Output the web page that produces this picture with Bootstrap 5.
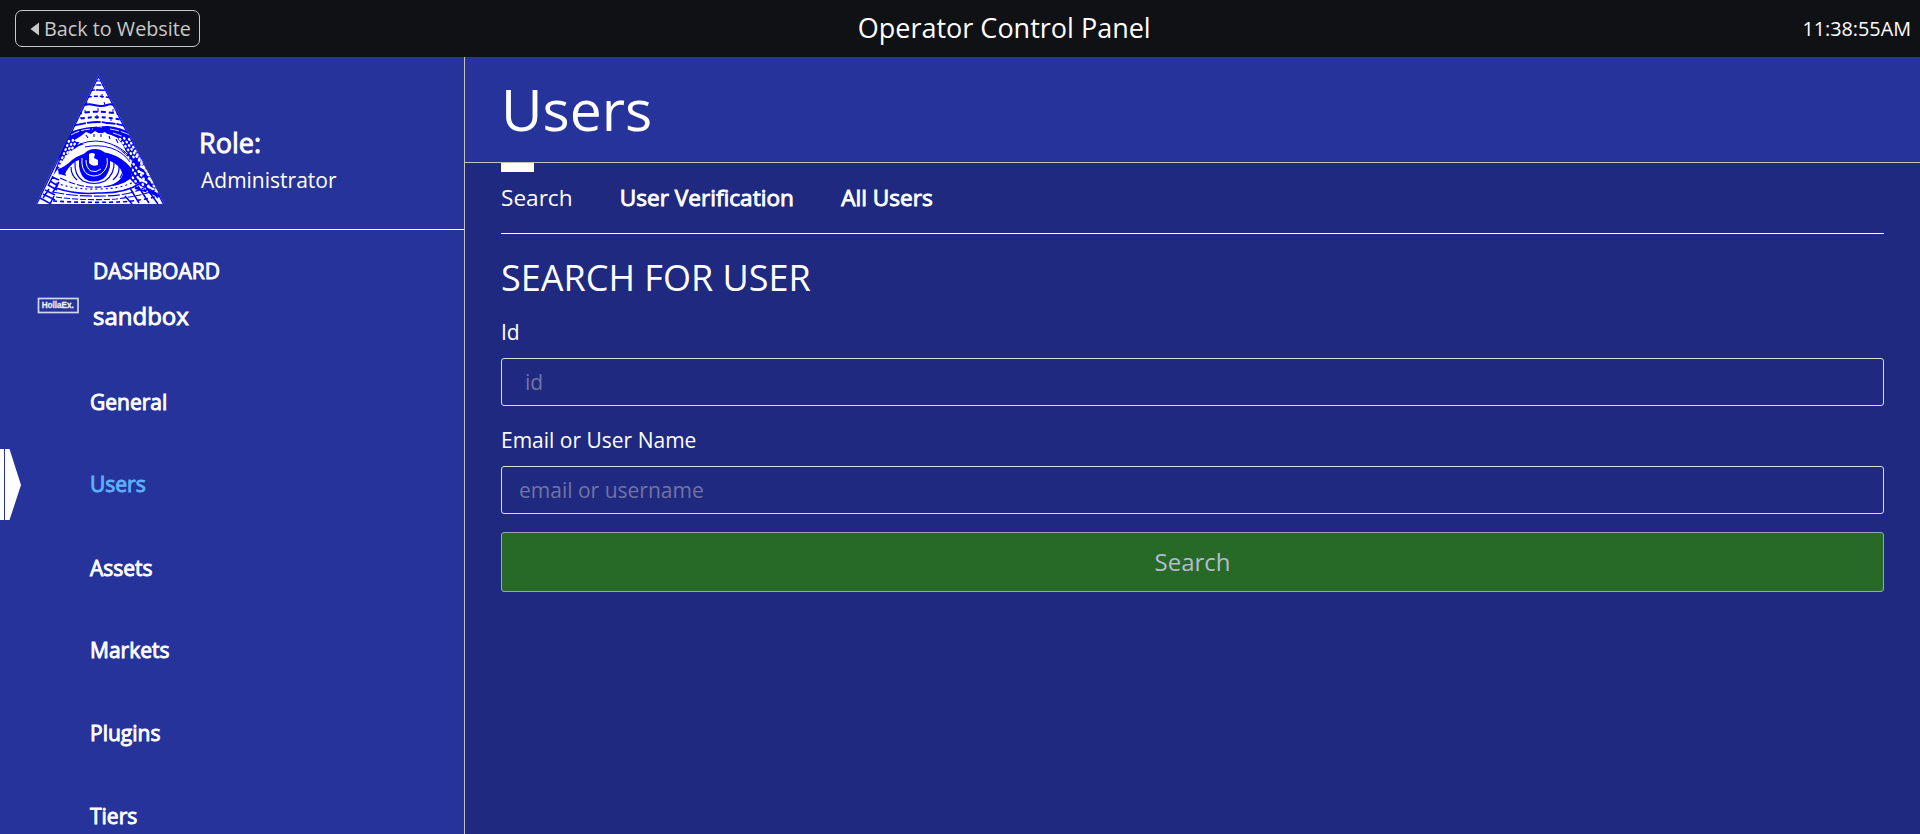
<!DOCTYPE html>
<html lang="en">
<head>
<meta charset="utf-8">
<meta name="viewport" content="width=device-width, initial-scale=1">
<title>Operator Control Panel</title>
<link href="https://cdn.jsdelivr.net/npm/bootstrap@5.3.0/dist/css/bootstrap.min.css" rel="stylesheet">
<style>
  body { font-family: "Open Sans", "Noto Sans", sans-serif; font-size: 21px; background: #1f2980; color: #fff; height: 100vh; overflow: hidden; }
  .topbar { height: 57px; background: #0f1114; padding: 0 9px 0 15px; font-size: 19.800px; line-height: 28px; }
  .topbar-title { font-size: 27px; line-height: 36px; padding: 0 0 2px 6px; }
  .btn-back { height: 37px; width: 185px; padding: 0 0 0 14px; border: 1px solid #c9c9c9; border-radius: 7px; color: #c9c9c9; font-size: 19.800px; line-height: 35px; white-space: nowrap; }
  .shell { height: calc(100vh - 57px); }
  .sidebar { width: 465px; background: #26339b; border-right: 1px solid #c4c2b8; overflow: hidden; }
  .profile { height: 173px; padding: 18px 0 0 36px; border-bottom: 1px solid #fff; }
  .heavy { -webkit-text-stroke: .9px currentColor; }
  .role-block { margin: 50px 0 0 35px; }
  .role-name { font-size: 27px; line-height: 36px; }
  .role-value { line-height: 32px; margin: 3px 0 0 2px; }
  .brand { padding: 19px 0 0 37px; height: 131px; }
  .brand-text { margin-left: 13px; line-height: 45px; }
  .brand-text .site { font-size: 24px; line-height: 43px; }
  .brand svg { margin-top: 48px; }
  .side-nav .nav-link { height: 82.8px; padding: 0 0 0 90px; line-height: 82.8px; color: #fff; position: relative; }
  .side-nav .nav-link.active { color: #5fb0ff; line-height: 81.4px; }
  .marker { position: absolute; left: 0; top: 5px; }
  .page-head { height: 106px; background: #26339b; border-bottom: 1px solid #c4c2b8; padding-left: 36px; }
  .page-head h1 { font-size: 57px; font-weight: 400; line-height: 104px; margin: 0; }
  .page-body { padding: 0 36px; }
  .tabs { height: 71px; border-bottom: 1px solid #fff; gap: 47.3px; font-size: 22.600px; }
  .tabs .nav-link { padding: 0; line-height: 70px; color: #fff; position: relative; }
  .tabs .nav-link.active::before { content: ""; position: absolute; left: 0; top: 0; width: 33px; height: 9px; background: #fff; }
  h2.section-title { font-size: 36px; font-weight: 400; line-height: 50px; margin: 19px 0 14px; }
  .form-label { display: block; margin: 0 0 11px; line-height: 30px; }
  .form-control, .form-control:focus { height: 48px; padding: 0 17px; font-size: 21px; background: transparent; border: 1px solid #dcdbe0; border-radius: 3px; color: #fff; }
  .form-control.id-field { padding-left: 23px; margin-bottom: 19px; }
  .form-control::placeholder { color: #7174a3; opacity: 1; }
  .btn-find { height: 60px; margin-top: 18px; font-size: 24px; padding: 0; background: #276a27; border: 1px solid #9aa2b4; border-radius: 3px; color: #b5bbd3; }
</style>
</head>
<body>
<header class="topbar d-flex align-items-center justify-content-between">
  <button class="btn btn-back d-flex align-items-center" type="button">
    <svg width="10" height="14" viewBox="0 0 10 14" class="me-1"><path d="M9 .5v13L.5 7z" fill="#c9c9c9"/></svg><span>Back to Website</span>
  </button>
  <div class="topbar-title">Operator Control Panel</div>
  <div>11:38:55AM</div>
</header>
<div class="shell d-flex">
  <aside class="sidebar flex-shrink-0">
    <div class="profile d-flex">
      <svg width="128" height="129" viewBox="0 0 128 129" aria-label="Eye of Providence">
        <defs><clipPath id="tri"><path d="M62.500 0L128 129H0z"/></clipPath></defs>
        <g clip-path="url(#tri)" fill="none" stroke="#00f">
          <path d="M0 0h128v129H0z" fill="#fff" stroke="none"/>
          <path d="M62.500 0L0 129M62.500 0L128 129" stroke-width="2.500"/>
          <!-- courses of brick near the apex -->
          <g stroke-width="1.500">
            <path d="M57 5.500q6 1 12 0" stroke-width="1"/>
            <path d="M54 9.500q9 1 17 0" stroke-dasharray="5 1"/>
            <path d="M50 16q12-2 25 0" stroke-dasharray="9 1"/>
            <path d="M46 23q16-4 32 1" stroke-dasharray="4 2"/>
            <path d="M43 32q7-4 15-2t13 0 12 2" stroke-width="2"/>
            <path d="M41 39q22-5 46 1" stroke-dasharray="5 3" stroke-width="2"/>
            <path d="M38 45q24-6 52 1" stroke-dasharray="4 3" stroke-width="2"/>
            <path d="M36 51q24-6 34-3 12 0 24 5" stroke-width="1.800" stroke-dasharray="14 1"/>
            <path d="M52 20v3m14-4v4M51 27l-1 3m18-3l1 3M49 35v3m13-5v4m15-3v4M45 42v2m16-4v4m14-2v4" stroke-width="1"/>
          </g>
          <!-- brow -->
          <path d="M34 57q14-6 38-6 13 1 24 8l5 19q-17-17-29-18l-3-3-5 2-5-3-4 3-5-2-5 4-8 5-12 15-5 5z" fill="#00f" stroke="none"/>
          <path d="M39 54q14-4 27-2M35 60q10-6 22-6M74 54q13 2 21 7M77 58q10 3 18 8" stroke="#fff" stroke-width=".9" stroke-dasharray="9 2"/>
          <!-- shaded stone on both sides -->
          <path d="M31 63L17 101q5-9 15-16 11-10 20-13l-7-4z" fill="#00f" stroke="none"/>
          <path d="M91 59l32 63q-16-6-31-10 3-15-1-26-8-12-17-18z" fill="#00f" stroke="none"/>
          <g stroke="#fff" stroke-width="2.300" stroke-linecap="round" stroke-dasharray=".8 3.600">
            <path d="M33 66l-10 25M37 65L27 88M41 65l-11 19"/>
            <path d="M84 64l15 20M88 63l27 40M93 64l28 53M90 78l26 38M94 91l18 26M94 99l13 17"/>
          </g>
          <g stroke="#fff" stroke-width="2.400"><path d="M104 91l5 3m-7 2l6 3m3-1l5 3m-14 2l7 4m3-4l7 5m-19 2l8 4m3-3l11 6M105 85l4 2"/></g>
          <!-- forehead and upper lid -->
          <path d="M43 68q5-9 19-10 18-1 26 14l3 7q-15-11-28-12-13-1-22 3z" fill="#fff" stroke="none"/>
          <path d="M50 60l2 3m6-4v3m7-3v3m8-1l1 3m6 0l2 4" stroke-width="1.100"/>
          <path d="M24 90q6-12 19-19 10-4 24-3 18 3 29 20l-3 5q-10-13-23-15-21-3-33 6-7 5-13 10z" fill="#fff" stroke="none"/>
          <path d="M44 69q16-6 31 0 15 5 22 18M49 72q13-3 26 1 12 4 19 14" stroke-width="1"/>
          <!-- eye opening -->
          <path d="M22 94q7-2 14-9 12-9 26-8 20 0 34 17l-1 10q-12 8-32 8-19 0-31-8l-9-3z" fill="#00f" stroke="none"/>
          <path d="M29 98q7-11 14-13-1 13 6 19 8 5 18 0 7-5 7-18 9 3 13 13-2 8-15 12-14 6-29 1-11-4-14-14z" fill="#fff" stroke="none"/>
          <circle cx="59" cy="89" r="15" fill="#00f" stroke="none"/>
          <g stroke="#fff" stroke-width="1"><path d="M46 83q-1 11 5 16 7 4 14 0 8-6 6-16"/><path d="M50 85q0 8 5 11 5 2 10-2"/></g>
          <path d="M39 87q-1 13 8 19 11 5 22 0 10-7 9-20M35 92q0 8 6 13M83 91q1 8-6 14" stroke-width="1.200"/>
          <path d="M53 79q3-2 6 0l-1 4 4 2v5q-6 2-9-2z" fill="#fff" stroke="none"/>
          <path d="M31 91l-2 7M87 97l-3 6M91 97l-6 9" stroke-width="1.100"/>
          <!-- lower lid and cheek -->
          <path d="M19 99q13 0 20 8 7 4 18 5 26 2 37-8l6 6-4 11q-40 9-85-4l6-14z" fill="#fff" stroke="none"/>
          <g stroke-width="1.100">
            <path d="M24 103q17 8 30 9 24 1 37-7" stroke-dasharray="7 2"/>
            <path d="M20 108q20 7 42 6 20 0 34-6" stroke-dasharray="2 3"/>
            <path d="M20 113q20 7 42 5 26 1 43-10" stroke-width="1.500"/>
            <path d="M16 117q27 5 50 4 28 0 46-10" stroke-dasharray="12 2"/>
            <path d="M20 122q30 4 60 2 25-3 39-9" stroke-dasharray="6 2"/>
            <path d="M17 126q33 2 65 1 24-1 44-7" stroke-dasharray="4 3" stroke-width="1.600"/>
            <path d="M16 102l7 3M14 106l8 5M12 110l9 5M9 115l10 5M7 119l12 6M4 123l11 6M17 101l-5 10m11-4l-6 10m-4-3l-6 9m11-2l-4 8M94 113l9 15m-1-17l11 17m-4-17l13 18M89 121l7 8m18-15l8 9" stroke-width="1.500"/>
          </g>
        </g>
      </svg>
      <div class="role-block">
        <div class="role-name heavy">Role:</div>
        <div class="role-value">Administrator</div>
      </div>
    </div>
    <div class="brand d-flex align-items-start">
      <svg width="43" height="17" viewBox="0 0 43 17"><rect x="1.500" y="1.500" width="39.500" height="14" fill="none" stroke="#d2d5ec" stroke-width="1.700"/><text x="4.700" y="11" textLength="32" lengthAdjust="spacingAndGlyphs" font-family="Liberation Sans, sans-serif" font-weight="700" font-size="8.500" fill="#eceefa" stroke="#eceefa" stroke-width=".3">HollaEx.</text></svg>
      <div class="brand-text heavy">
        <div>DASHBOARD</div>
        <div class="site">sandbox</div>
      </div>
    </div>
    <nav class="side-nav nav flex-column heavy">
      <a class="nav-link" href="#">General</a>
      <a class="nav-link active" href="#"><svg class="marker" width="21" height="71" viewBox="0 0 21 71" fill="#fff"><path d="M0 0h4v71H0zM5 0h4.500L21 36 9.500 71H5z"/></svg>Users</a>
      <a class="nav-link" href="#">Assets</a>
      <a class="nav-link" href="#">Markets</a>
      <a class="nav-link" href="#">Plugins</a>
      <a class="nav-link" href="#">Tiers</a>
    </nav>
  </aside>
  <main class="flex-grow-1">
    <div class="page-head"><h1>Users</h1></div>
    <div class="page-body">
      <nav class="tabs nav flex-nowrap">
        <a class="nav-link active" href="#">Search</a>
        <a class="nav-link heavy" href="#">User Verification</a>
        <a class="nav-link heavy" href="#">All Users</a>
      </nav>
      <h2 class="section-title">SEARCH FOR USER</h2>
      <form>
        <label class="form-label" for="uid">Id</label>
        <input class="form-control id-field" id="uid" type="text" placeholder="id">
        <label class="form-label" for="mail">Email or User Name</label>
        <input class="form-control" id="mail" type="text" placeholder="email or username">
        <button class="btn btn-find w-100" type="button">Search</button>
      </form>
    </div>
  </main>
</div>
<script src="https://cdn.jsdelivr.net/npm/bootstrap@5.3.0/dist/js/bootstrap.bundle.min.js"></script>
</body>
</html>
